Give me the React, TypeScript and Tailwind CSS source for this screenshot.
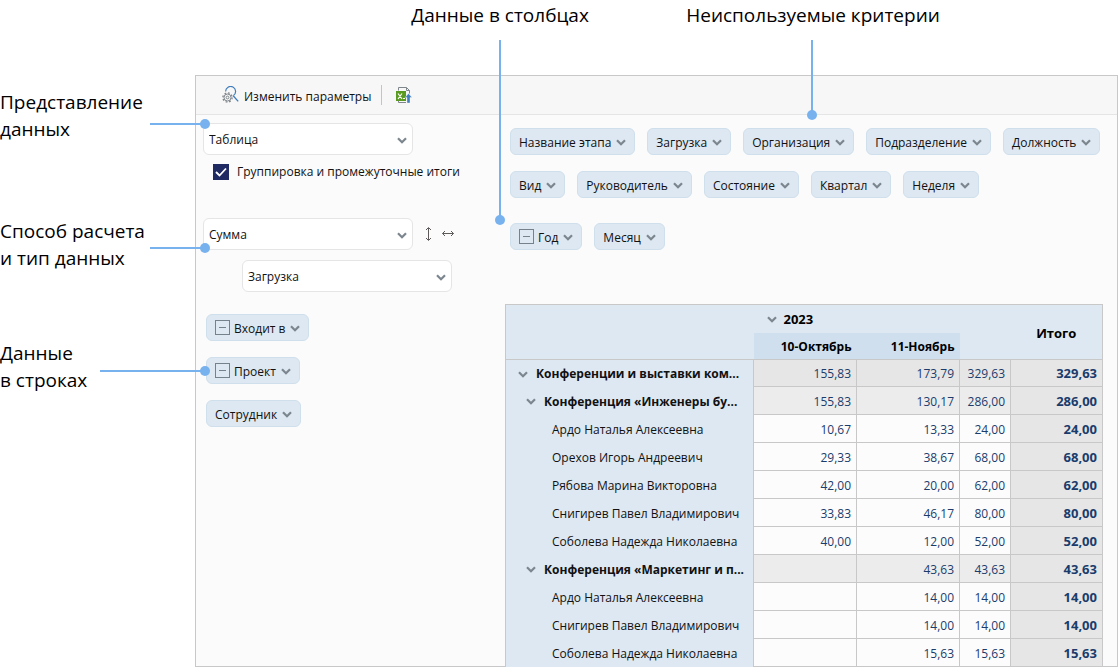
import { useState } from "react";

type Row = {
  name: string;
  level: 0 | 1 | 2;
  values: string[];
  total: string;
};

const unusedCriteria = [
  ["Название этапа", "Загрузка", "Организация", "Подразделение", "Должность"],
  ["Вид", "Руководитель", "Состояние", "Квартал", "Неделя"],
];

const rows: Row[] = [
  { name: "Конференции и выставки ком...", level: 0, values: ["155,83", "173,79", "329,63"], total: "329,63" },
  { name: "Конференция «Инженеры бу...", level: 1, values: ["155,83", "130,17", "286,00"], total: "286,00" },
  { name: "Ардо Наталья Алексеевна", level: 2, values: ["10,67", "13,33", "24,00"], total: "24,00" },
  { name: "Орехов Игорь Андреевич", level: 2, values: ["29,33", "38,67", "68,00"], total: "68,00" },
  { name: "Рябова Марина Викторовна", level: 2, values: ["42,00", "20,00", "62,00"], total: "62,00" },
  { name: "Снигирев Павел Владимирович", level: 2, values: ["33,83", "46,17", "80,00"], total: "80,00" },
  { name: "Соболева Надежда Николаевна", level: 2, values: ["40,00", "12,00", "52,00"], total: "52,00" },
  { name: "Конференция «Маркетинг и п...", level: 1, values: ["", "43,63", "43,63"], total: "43,63" },
  { name: "Ардо Наталья Алексеевна", level: 2, values: ["", "14,00", "14,00"], total: "14,00" },
  { name: "Снигирев Павел Владимирович", level: 2, values: ["", "14,00", "14,00"], total: "14,00" },
  { name: "Соболева Надежда Николаевна", level: 2, values: ["", "15,63", "15,63"], total: "15,63" },
];

const rowHeight = ["h-[27px]", "h-7", "h-7"];
const namePadding = ["pl-3", "pl-5", "pl-[46px]"];
const valueStyle = ["bg-[#e6e6e6]", "bg-[#ececec] font-medium", "bg-[#fcfcfc]"];

function Chevron({ className = "" }: { className?: string }) {
  return (
    <svg className={`shrink-0 ${className}`} width="10" height="7" viewBox="0 0 10 7" fill="none" aria-hidden="true">
      <path d="M1 1.2 5 5.2 9 1.2" stroke="#7b868e" strokeWidth="2.2" />
    </svg>
  );
}

function Chip({ label, collapsible = false }: { label: string; collapsible?: boolean }) {
  return (
    <button
      type="button"
      className="flex h-[27px] items-center rounded-md border border-[#cfdfec] bg-[#dde8f2] px-2 pt-0.5 text-xs whitespace-nowrap text-[#111]"
    >
      {collapsible && (
        <svg className="mr-1 mb-0.5 shrink-0" width="15" height="15" viewBox="0 0 15 15" fill="none" stroke="#75828c" aria-hidden="true">
          <rect x="0.5" y="0.5" width="14" height="14" />
          <path d="M4 7.5h7" />
        </svg>
      )}
      {label}
      <Chevron className="ml-[5px]" />
    </button>
  );
}

function Select({ label, value }: { label: string; value: string }) {
  return (
    <div className="relative w-[210px]">
      <select
        aria-label={label}
        defaultValue={value}
        className="h-8 w-full appearance-none rounded-md border border-[#e5e5e5] bg-white px-[5px] pt-0.5 text-xs text-[#111]"
      >
        <option>{value}</option>
      </select>
      <Chevron className="pointer-events-none absolute top-[14px] right-[6px]" />
    </div>
  );
}

function SearchGearIcon() {
  return (
    <svg width="18" height="18" viewBox="0 0 18 18" fill="none" aria-hidden="true">
      <path d="M3.6 5.4A5 5 0 1 1 11.4 9.6" stroke="#3f7dbd" strokeWidth="1.2" />
      <path d="M11.2 9.8 16.2 15.4" stroke="#3f7dbd" strokeWidth="1.3" />
      <circle cx="5.5" cy="11.5" r="3.5" stroke="#7f868c" />
      <circle cx="5.5" cy="11.5" r="4.6" stroke="#7f868c" strokeWidth="1.4" strokeDasharray="1.8 1.8" />
      <circle cx="5.5" cy="11.5" r="1.4" stroke="#7f868c" />
    </svg>
  );
}

function ExcelIcon() {
  return (
    <svg width="16" height="17" viewBox="0 0 16 17" fill="none" aria-hidden="true">
      <path d="M2.5 3.5v-3h8l3 3v3M10.5 0.5v3h3M2.5 14v1.5H10" stroke="#7f868c" />
      <rect x="0" y="4" width="10" height="10" fill="#5b9a20" />
      <path d="m2 6.500 4 5.500M6 6.500 2 12M7 11.500h2" stroke="#fff" strokeWidth="1.200" />
      <path d="M12.500 6.500 16 10.500h-2V16h-3v-5.500H9z" fill="#3f7dbd" stroke="#f7f7f7" strokeWidth="0.400" />
    </svg>
  );
}

export default function App() {
  const [grouping, setGrouping] = useState(true);

  return (
    <div className="min-h-screen bg-white font-['Open_Sans','Noto_Sans',sans-serif] text-black">
      <header className="flex h-[75px] gap-[100px] pt-[2px] pl-[412px] text-[19px] leading-[27px]">
        <div className="relative flex w-[176px] justify-center whitespace-nowrap">
          Данные в столбцах
          <span className="absolute top-[38px] left-[87px] z-10 h-[180px] w-[2px] bg-[#78b2ee]" />
          <span className="absolute top-[213px] left-[83px] z-10 size-[10px] rounded-full bg-[#78b2ee]" />
        </div>
        <div className="relative flex w-[250px] justify-center whitespace-nowrap">
          Неиспользуемые критерии
          <span className="absolute top-[38px] left-[123px] z-10 h-[75px] w-[2px] bg-[#78b2ee]" />
          <span className="absolute top-[108px] left-[119px] z-10 size-[10px] rounded-full bg-[#78b2ee]" />
        </div>
      </header>

      <div className="flex">
        <aside className="flex w-[195px] shrink-0 flex-col pt-[14px] text-[19px] leading-[27px]">
          <div className="relative">
            Представление
            <br />
            данных
            <span className="absolute top-[34px] -right-[10px] z-10 h-[2px] w-[55px] bg-[#78b2ee]" />
            <span className="absolute top-[30px] -right-[15px] z-10 size-[10px] rounded-full bg-[#78b2ee]" />
          </div>
          <div className="relative mt-[75px]">
            Способ расчета
            <br />и тип данных
            <span className="absolute top-[29px] -right-[10px] z-10 h-[2px] w-[55px] bg-[#78b2ee]" />
            <span className="absolute top-[25px] -right-[15px] z-10 size-[10px] rounded-full bg-[#78b2ee]" />
          </div>
          <div className="relative mt-[68px]">
            Данные
            <br />в строках
            <span className="absolute top-[30px] -right-[10px] z-10 h-[2px] w-[105px] bg-[#78b2ee]" />
            <span className="absolute top-[26px] -right-[15px] z-10 size-[10px] rounded-full bg-[#78b2ee]" />
          </div>
        </aside>

        <main className="min-w-0 flex-1 border border-[#c8c8c8] bg-[#fbfbfb]">
          <div className="flex h-[39px] items-center border-b border-[#e5e5e5] bg-[#f7f7f7] pl-[26px] text-xs">
            <button type="button" className="flex items-center gap-1 text-[#111]">
              <SearchGearIcon />
              <span className="pt-1">Изменить параметры</span>
            </button>
            <span className="ml-[10px] h-5 w-px bg-[#bfc5ca]" />
            <button type="button" aria-label="Экспорт в Excel" className="ml-[14px]">
              <ExcelIcon />
            </button>
          </div>

          <div className="flex">
            <section className="w-[309px] shrink-0 pt-2 pl-[7px]">
              <Select label="Представление данных" value="Таблица" />
              <label className="mt-[7px] ml-[10px] flex h-5 items-center gap-2 text-xs text-[#111]">
                <span className="relative size-4">
                  <input
                    type="checkbox"
                    checked={grouping}
                    onChange={(e) => setGrouping(e.target.checked)}
                    className="block size-4 appearance-none border border-[#1f2a63] bg-white checked:bg-[#1f2a63]"
                  />
                  {grouping && (
                    <svg className="pointer-events-none absolute inset-0" width="16" height="16" viewBox="0 0 16 16" fill="none">
                      <path d="m3 8 3.500 3.500L13 4.500" stroke="#fff" strokeWidth="1.800" />
                    </svg>
                  )}
                </span>
                Группировка и промежуточные итоги
              </label>

              <div className="mt-9 flex items-center">
                <Select label="Способ расчета" value="Сумма" />
                <button type="button" aria-label="По вертикали" className="ml-[10px]">
                  <svg width="10" height="16" viewBox="0 0 10 16" fill="none" stroke="#5f5a5a">
                    <path d="M5.500 2v12M3 4l2.500-2.500L8 4M3 12l2.500 2.500L8 12" />
                  </svg>
                </button>
                <button type="button" aria-label="По горизонтали" className="ml-2">
                  <svg width="14" height="8" viewBox="0 0 14 8" fill="none" stroke="#5f5a5a">
                    <path d="M1.500 3.500h11M4 1 1.500 3.500 4 6M10 1l2.500 2.500L10 6" />
                  </svg>
                </button>
              </div>
              <div className="mt-[10px] ml-[39px]">
                <Select label="Тип данных" value="Загрузка" />
              </div>

              <div className="mt-[22px] ml-[3px] flex flex-col items-start gap-4">
                <Chip label="Входит в" collapsible />
                <Chip label="Проект" collapsible />
                <Chip label="Сотрудник" />
              </div>
            </section>

            <section className="min-w-0 flex-1 pt-[13px] pr-[14px]">
              <div className="flex flex-col gap-4 pl-[5px]">
                {unusedCriteria.map((line, i) => (
                  <div key={i} className="flex gap-3">
                    {line.map((label) => (
                      <Chip key={label} label={label} />
                    ))}
                  </div>
                ))}
              </div>
              <div className="mt-[25px] flex gap-3 pl-[5px]">
                <Chip label="Год" collapsible />
                <Chip label="Месяц" />
              </div>

              <table className="mt-[54px] -mb-px w-full table-fixed border-collapse text-xs">
                <colgroup>
                  <col className="w-[248px]" />
                  <col className="w-[103px]" />
                  <col className="w-[103px]" />
                  <col className="w-[51px]" />
                  <col />
                </colgroup>
                <thead className="border border-[#c8c8c8] bg-[#dde8f2] text-black">
                  <tr className="h-7">
                    <th rowSpan={2} />
                    <th colSpan={3} className="pt-0.5 pl-[13px] text-left text-[13px]">
                      <span className="flex items-center gap-[7px]">
                        <Chevron />
                        2023
                      </span>
                    </th>
                    <th rowSpan={2} className="pt-1 text-[13px]">
                      Итого
                    </th>
                  </tr>
                  <tr className="h-[27px]">
                    <th className="bg-[#cfdfee] pt-0.5 pr-[5px] text-right">10-Октябрь</th>
                    <th className="bg-[#cfdfee] pt-0.5 pr-[5px] text-right">11-Ноябрь</th>
                    <th />
                  </tr>
                </thead>
                <tbody>
                  {rows.map((row, i) => (
                    <tr key={i} className={`text-[#1a3c6c] ${rowHeight[row.level]}`}>
                      <th
                        scope="row"
                        className={`overflow-hidden border-x border-[#c8c8c8] bg-[#dde8f2] pt-0.5 text-left whitespace-nowrap text-[#111] ${namePadding[row.level]} ${row.level === 2 ? "font-normal" : "font-bold"}`}
                      >
                        <span className="flex items-center gap-2">
                          {row.level < 2 && <Chevron />}
                          {row.name}
                        </span>
                      </th>
                      {row.values.map((value, j) => (
                        <td key={j} className={`border border-[#c8c8c8] pt-0.5 pr-[5px] text-right ${valueStyle[row.level]}`}>
                          {value}
                        </td>
                      ))}
                      <td className="border border-[#c8c8c8] bg-[#e6e6e6] pt-0.5 pr-[5px] text-right text-[13px] font-bold">{row.total}</td>
                    </tr>
                  ))}
                </tbody>
              </table>
            </section>
          </div>
        </main>
      </div>
    </div>
  );
}
